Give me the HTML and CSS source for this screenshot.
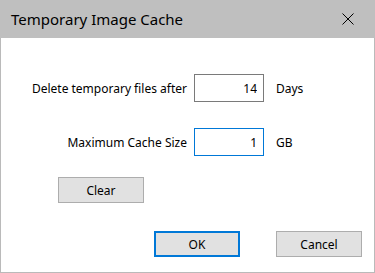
FILE: index.html
```html
<!DOCTYPE html>
<html lang="en">
<head>
<meta charset="UTF-8">
<meta name="viewport" content="width=device-width, initial-scale=1.0">
<title>Temporary Image Cache</title>
<link rel="stylesheet" href="styles.css">
</head>
<body>
<div class="dialog">
    <div class="titlebar">
        <span class="title">Temporary Image Cache</span>
        <button class="close" type="button" aria-label="Close">
            <svg width="12" height="12" viewBox="0 0 12 12">
                <path d="M0.5 0.5 L11.5 11.5 M11.5 0.5 L0.5 11.5" stroke="#000" stroke-width="1" fill="none"/>
            </svg>
        </button>
    </div>

    <form class="content" id="cacheForm">
        <div class="fields">
            <label for="days">Delete temporary files after</label>
            <input type="text" id="days" name="days" value="14">
            <span class="unit">Days</span>

            <label for="size">Maximum Cache Size</label>
            <input type="text" id="size" name="size" value="1" class="focused">
            <span class="unit">GB</span>
        </div>

        <button type="button" class="btn clear">Clear</button>

        <div class="footer">
            <button type="submit" class="btn default">OK</button>
            <button type="button" class="btn">Cancel</button>
        </div>
    </form>
</div>
</body>
</html>
```

FILE: styles.css
```css
body {
    margin: 0;
    font-family: "Noto Sans", sans-serif;
    font-size: 12px;
    color: #000;
    background-color: #fff;
}

.dialog {
    width: 375px;
    height: 273px;
    box-sizing: border-box;
    border: 1px solid #bababa;
    border-top: none;
    display: flex;
    flex-direction: column;
}

.titlebar {
    height: 38px;
    margin: 0 -1px;
    background-color: #bfbfbf;
    display: flex;
    align-items: center;
    justify-content: space-between;
    padding-left: 11px;
}

.title {
    font-size: 15px;
}

.close {
    width: 46px;
    height: 38px;
    border: none;
    background: none;
    padding: 0;
    margin-right: 4px;
    display: flex;
    align-items: center;
    justify-content: center;
}

.content {
    flex: 1;
    display: flex;
    flex-direction: column;
    padding-top: 36px;
}

.fields {
    display: grid;
    grid-template-columns: 186px 70px auto;
    column-gap: 7px;
    row-gap: 26px;
    align-items: center;
}

.fields label {
    text-align: right;
}

.fields input {
    box-sizing: border-box;
    width: 70px;
    height: 28px;
    border: 1px solid #7a7a7a;
    padding: 0 6px;
    text-align: right;
    font-family: inherit;
    font-size: 12px;
    outline: none;
}

.fields input.focused {
    border-color: #0078d7;
}

.unit {
    margin-left: 5px;
}

.btn {
    box-sizing: border-box;
    width: 86px;
    height: 26px;
    background-color: #e1e1e1;
    border: 1px solid #adadad;
    font-family: inherit;
    font-size: 12px;
    color: #000;
    padding: 0;
}

.btn.default {
    border: 2px solid #0078d7;
}

.clear {
    margin: 21px 0 0 57px;
}

.footer {
    display: flex;
    justify-content: flex-end;
    gap: 36px;
    margin-top: 28px;
    padding-right: 12px;
}
```
